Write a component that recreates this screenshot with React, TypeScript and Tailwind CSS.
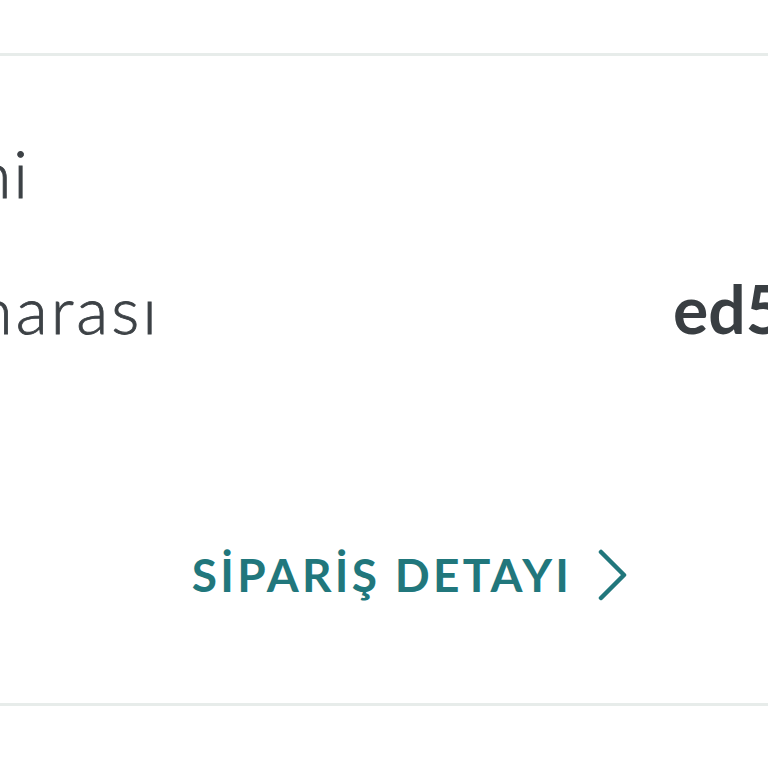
export default function App() {
  return (
    <div className="w-[768px] h-[768px] overflow-hidden bg-white" style={{ fontFamily: "Lato, 'Noto Sans', sans-serif" }}>
      <div className="h-[53px]" />
      <div className="h-[3px] bg-[#e7ecea]" />
      <div className="flex flex-col h-[647px]">
        <div className="flex h-[100px] items-end mt-[50px]">
          <div className="w-[30px] flex justify-end whitespace-nowrap text-[66px] leading-none font-light text-[#3d4246] tracking-[2px] [-webkit-text-stroke:0.8px_#3d4246]">
            Ödeme Yöntemi
          </div>
        </div>
        <div className="flex items-end mt-[38px] h-[98px]">
          <div className="w-[160px] flex justify-end whitespace-nowrap text-[66px] leading-none font-light text-[#3d4246] tracking-[3px] [-webkit-text-stroke:0.8px_#3d4246]">
            Sipariş Numarası
          </div>
          <div className="ml-[513px] whitespace-nowrap text-[66px] leading-none font-bold text-[#393e42]">
            ed5a9c31
          </div>
        </div>
        <div className="flex justify-center items-center mt-[207px] gap-[26px] pl-[52px]">
          <span className="text-[46px] font-bold tracking-[3.3px] text-[#21777c] leading-none">SİPARİŞ DETAYI</span>
          <svg width="30" height="52" viewBox="0 0 30 52" fill="none">
            <path d="M3 3 L26 26 L3 49" stroke="#21777c" strokeWidth="4.5" strokeLinecap="round" strokeLinejoin="round" />
          </svg>
        </div>
      </div>
      <div className="h-[3px] bg-[#e7ecea]" />
    </div>
  );
}
